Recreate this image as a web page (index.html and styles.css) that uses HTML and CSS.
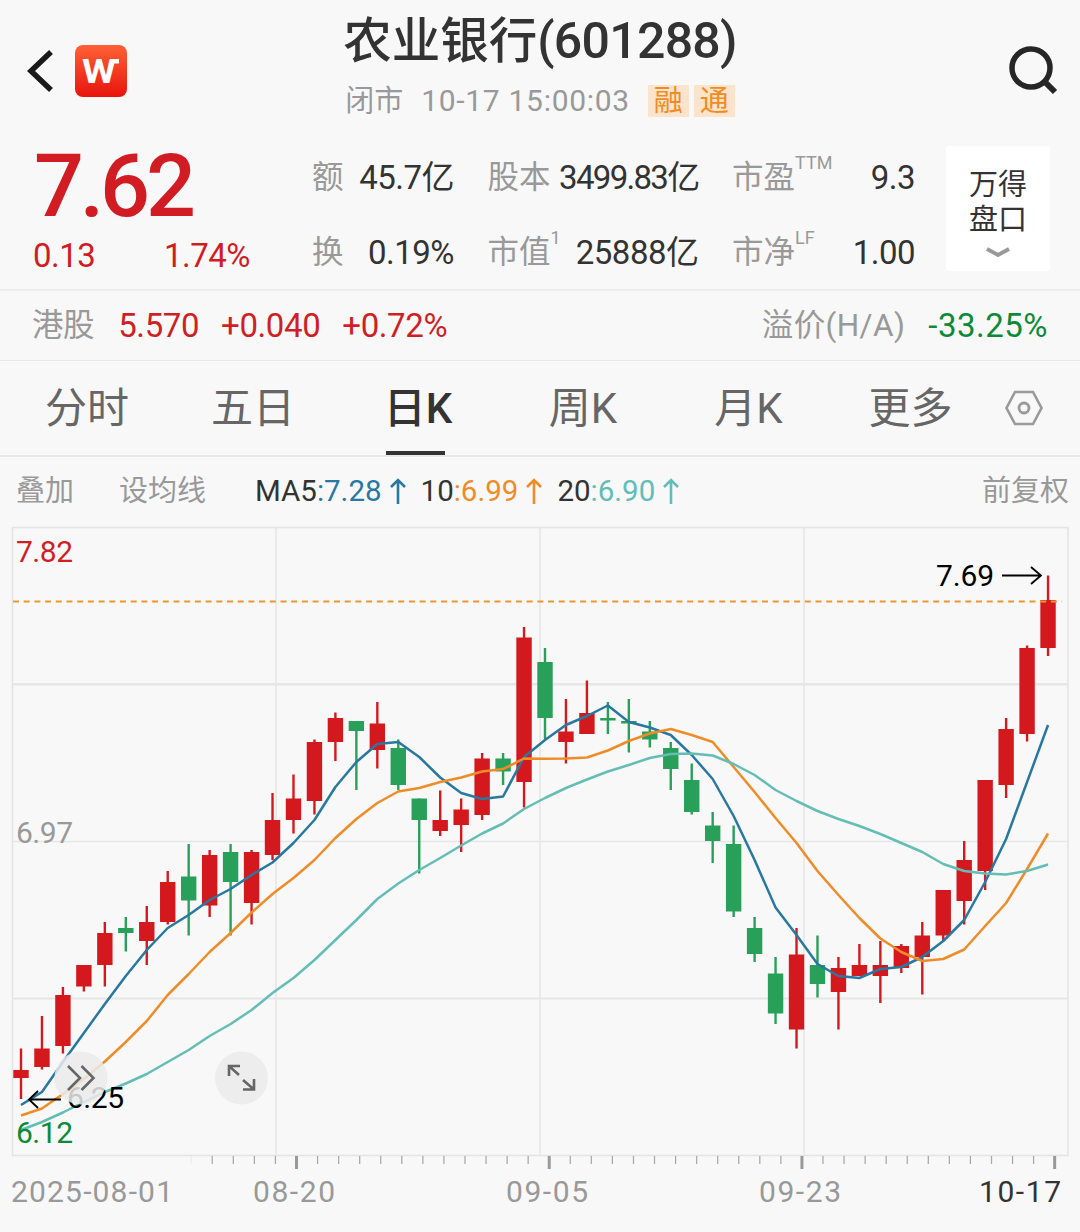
FILE: index.html
```html
<!DOCTYPE html>
<html lang="zh-CN">
<head>
    <meta charset="UTF-8">
    <meta name="viewport" content="width=device-width, initial-scale=1.0">
    <title>农业银行(601288)</title>
    <link rel="stylesheet" href="styles.css">
</head>
<body>
    <header class="header">
      <div class="header-left">
        <svg class="back" width="28" height="44" viewBox="0 0 28 44">
          <path d="M26 3 L6 22 L26 41" fill="none" stroke="#1a1a1a" stroke-width="5.5"/>
        </svg>
        <svg class="logo" width="52" height="52" viewBox="0 0 52 52">
          <defs>
            <linearGradient id="logoBg" x1="0" y1="0" x2="0" y2="1">
              <stop offset="0" stop-color="#ff6136"/>
              <stop offset="1" stop-color="#e8140c"/>
            </linearGradient>
          </defs>
          <rect width="52" height="52" rx="8" fill="url(#logoBg)"/>
          <text class="logo-text" x="7" y="38" textLength="34" lengthAdjust="spacingAndGlyphs">W</text>
          <rect x="36" y="14" width="8" height="4.5" fill="#fff"/>
        </svg>
      </div>
      <div class="header-title">
        <h1>农业银行<span class="code">(601288)</span></h1>
        <div class="status">
          <span>闭市</span>
          <span class="time">10-17 15:00:03</span>
          <span class="tag">融</span>
          <span class="tag">通</span>
        </div>
      </div>
      <svg class="search" width="52" height="52" viewBox="0 0 52 52">
        <circle cx="24" cy="23" r="19" fill="none" stroke="#262626" stroke-width="5.5"/>
        <path d="M37 36 L48 47" stroke="#262626" stroke-width="6"/>
      </svg>
    </header>

    <section class="quote">
      <div class="price-box">
        <div class="price">7.62</div>
        <div class="change"><span>0.13</span><span>1.74%</span></div>
      </div>
      <div class="stats">
        <div class="stat"><span class="label">额</span><span class="value">45.7亿</span></div>
        <div class="stat"><span class="label">股本</span><span class="value tight">3499.83亿</span></div>
        <div class="stat"><span class="label">市盈<sup>TTM</sup></span><span class="value">9.3</span></div>
        <div class="stat"><span class="label">换</span><span class="value">0.19%</span></div>
        <div class="stat"><span class="label">市值<sup>1</sup></span><span class="value">25888亿</span></div>
        <div class="stat"><span class="label">市净<sup>LF</sup></span><span class="value">1.00</span></div>
      </div>
      <div class="depth">
        <div>万得<br>盘口</div>
        <svg width="24" height="12" viewBox="0 0 24 12">
          <path d="M1 2 L12 8 L23 2" fill="none" stroke="#999" stroke-width="3.8"/>
        </svg>
      </div>
    </section>

    <section class="hk">
      <span class="label">港股</span>
      <span class="up hk-price">5.570</span>
      <span class="up hk-change">+0.040</span>
      <span class="up">+0.72%</span>
      <span class="label premium">溢价(H/A)</span>
      <span class="down">-33.25%</span>
    </section>

    <nav class="tabs">
      <span class="tab">分时</span>
      <span class="tab">五日</span>
      <span class="tab active">日K</span>
      <span class="tab">周K</span>
      <span class="tab">月K</span>
      <span class="tab">更多</span>
      <svg class="setting" width="38" height="36" viewBox="0 0 38 36">
        <path d="M10 2 H28 L36.5 18 L28 34 H10 L1.5 18 Z" fill="none" stroke="#999" stroke-width="2.6"/>
        <circle cx="19" cy="18" r="5" fill="none" stroke="#999" stroke-width="2.8"/>
      </svg>
    </nav>

    <section class="ma">
      <span class="overlay">叠加</span>
      <span class="set-ma">设均线</span>
      <span class="ma-item ma5">MA5<b>:7.28</b><svg width="16" height="26" viewBox="0 0 16 26"><path d="M8 26 V2 M1 9 L8 2 L15 9"/></svg></span>
      <span class="ma-item ma10">10<b>:6.99</b><svg width="16" height="26" viewBox="0 0 16 26"><path d="M8 26 V2 M1 9 L8 2 L15 9"/></svg></span>
      <span class="ma-item ma20">20<b>:6.90</b><svg width="16" height="26" viewBox="0 0 16 26"><path d="M8 26 V2 M1 9 L8 2 L15 9"/></svg></span>
      <span class="adjust">前复权</span>
    </section>

    <svg id="chart" class="chart" width="1080" height="707" viewBox="0 525 1080 707"></svg>

    <script src="chart.js"></script>
</body>
</html>
```

FILE: styles.css
```css
* {
  box-sizing: border-box;
}

body {
  margin: 0;
  width: 1080px;
  height: 1232px;
  overflow: hidden;
  background-color: #f8f8f8;
  font-family: Roboto, "Noto Sans CJK SC", sans-serif;
  color: #333;
}

.header {
  display: grid;
  grid-template-columns: 300px 480px 300px;
  height: 146px;
}

.header-left {
  display: flex;
  align-items: center;
  height: 141px;
  padding-left: 25px;
}

.logo {
  margin-left: 22px;
}

.logo-text {
  font-size: 34px;
  font-weight: 700;
  fill: #fff;
}

.header-title {
  text-align: center;
}

h1 {
  margin: 5px 0 0;
  font-size: 48.5px;
  line-height: 72px;
  font-weight: 500;
  white-space: nowrap;
}

.code {
  font-size: 50px;
  letter-spacing: -0.7px;
}

.status {
  display: flex;
  justify-content: center;
  align-items: center;
  height: 46px;
  line-height: 46px;
  font-size: 29px;
  color: #999;
}

.time {
  margin: 0 18px;
  font-size: 30px;
  letter-spacing: 0.7px;
}

.tag {
  width: 41px;
  height: 32px;
  margin-right: 5px;
  line-height: 33px;
  background-color: #fce3cb;
  color: #f08c22;
}

.tag:last-child {
  margin-right: 0;
}

.search {
  justify-self: end;
  margin: 45px 21px 0 0;
}

.quote {
  display: flex;
  height: 145px;
  border-bottom: 2px solid #ebebeb;
}

.price-box {
  width: 312px;
  padding-left: 33px;
  color: #d01c22;
}

.price {
  height: 80px;
  padding-left: 1px;
  font-size: 88px;
  line-height: 80px;
  font-weight: 500;
  letter-spacing: -4.2px;
}

.change {
  display: flex;
  justify-content: space-between;
  width: 217px;
  font-size: 33px;
  line-height: 60px;
  letter-spacing: -0.5px;
}

.stats {
  display: grid;
  grid-template-columns: 142px 211px 183px;
  grid-auto-rows: 75px;
  column-gap: 33.5px;
  margin-top: -6px;
  width: 634px;
}

.stat {
  display: flex;
  justify-content: space-between;
  line-height: 75px;
  white-space: nowrap;
}

.label {
  font-size: 31.5px;
  color: #999;
}

.label sup {
  position: relative;
  top: -8px;
  font-size: 18px;
  line-height: 0;
  vertical-align: super;
}

.value {
  font-size: 33px;
  letter-spacing: -0.5px;
}

.tight {
  letter-spacing: -1.7px;
}

.depth {
  display: flex;
  flex-direction: column;
  align-items: center;
  width: 104px;
  height: 125px;
  padding-top: 22px;
  border-radius: 3px;
  background-color: #fff;
  font-size: 29px;
  line-height: 35px;
}

.depth svg {
  margin-top: 9px;
}

.hk {
  display: flex;
  align-items: center;
  height: 70px;
  line-height: 69px;
  padding: 0 32px;
  border-bottom: 1px solid #e8e8e8;
  font-size: 33px;
  letter-spacing: -0.4px;
}

.up {
  color: #cf1f25;
}

.hk-price,
.hk-change {
  margin-right: 22px;
}

.hk-price {
  margin-left: 24px;
}

.premium {
  margin: 0 23px 0 auto;
  letter-spacing: 0.4px;
}

.down {
  color: #0c8a38;
  letter-spacing: 0.5px;
}

.tabs {
  display: grid;
  grid-template-columns: 174px 158px 172px 158px 173px 151px 74px;
  align-items: center;
  height: 96px;
  border-bottom: 2px solid #e8e8e8;
  font-size: 42px;
  color: #666;
}

.tab {
  position: relative;
  height: 94px;
  line-height: 95px;
  text-align: center;
}

.setting {
  margin-left: 19px;
}

.active {
  color: #333;
  font-weight: 500;
}

.active::after {
  content: "";
  position: absolute;
  left: 54px;
  bottom: 0;
  width: 59px;
  height: 4px;
  background-color: #333;
}

.ma {
  display: flex;
  align-items: center;
  height: 68px;
  line-height: 68px;
  padding: 0 11px 0 16px;
  font-size: 29.5px;
}

.overlay,
.set-ma,
.adjust {
  font-size: 29px;
  color: #999;
}

.set-ma {
  margin: 0 49px 0 45px;
}

.ma-item {
  display: flex;
  align-items: center;
  margin-right: 15px;
}

.ma-item b {
  font-weight: 400;
}

.ma-item svg {
  margin-left: 8px;
  fill: none;
  stroke-width: 2.6;
}

.ma5 b { color: #2878a4; }
.ma5 svg { stroke: #2878a4; }
.ma10 b { color: #f08c28; }
.ma10 svg { stroke: #f08c28; }
.ma20 b { color: #62bdb8; }
.ma20 svg { stroke: #62bdb8; }

.adjust {
  margin-left: auto;
}

.chart {
  display: block;
}

.chart text {
  font-size: 30px;
}

.chart .axis {
  fill: #999;
}
```

FILE: chart.js
```js
// color, high, body top, body bottom, low
const candles = [
  ['r', 1048.5, 1070, 1078, 1099], ['r', 1016, 1048.5, 1067, 1069.5], ['r', 987, 995, 1046, 1053.5],
  ['r', 965, 965, 986.5, 991.5], ['r', 922, 933, 965, 986.5], ['g', 917, 928, 933, 951.5],
  ['r', 906, 922, 941, 965], ['r', 871, 882, 922, 924.5], ['g', 844, 876.5, 900.5, 935.5],
  ['r', 850, 855, 905.5, 917], ['g', 844, 852, 882, 935.5], ['r', 850, 852, 903, 924.5],
  ['r', 793, 820, 855, 860], ['r', 774.5, 798.5, 820, 833.5], ['r', 739.5, 742, 801, 814.5],
  ['r', 712.5, 718, 742, 761], ['g', 721, 721, 731, 790], ['r', 702, 723.5, 750, 768.5],
  ['g', 739.5, 748, 785, 790], ['g', 798.5, 798.5, 820, 873.5], ['r', 790.5, 820, 831, 836],
  ['r', 798.5, 809.5, 825, 852], ['r', 753, 758.5, 815, 820], ['g', 753, 758.5, 771.5, 785],
  ['r', 627, 637.5, 782, 807.5], ['g', 648, 662, 718, 739], ['r', 699, 731.5, 742, 763.5],
  ['r', 680.5, 713, 734, 734], ['g', 702, 718, 720.5, 734], ['g', 699, 721, 723.5, 752.5],
  ['g', 721, 731.5, 739.5, 747.5], ['g', 742, 748, 769, 790], ['g', 763.5, 780, 812, 814.5],
  ['g', 812, 825.5, 841, 863], ['g', 825.5, 844, 911.5, 917], ['g', 917, 928, 954, 962],
  ['g', 957, 973.5, 1013.5, 1024], ['r', 928, 954.5, 1029.5, 1048.5], ['g', 935.5, 965, 984, 997.5],
  ['r', 957, 968, 992, 1029.5], ['r', 944, 965, 976, 976], ['r', 941, 965, 976, 1003],
  ['r', 944, 946, 968, 973], ['r', 922, 935.5, 957, 994.5], ['r', 890, 890, 935.5, 941],
  ['r', 841, 860, 901, 924.5], ['r', 780, 780, 871, 890], ['r', 718, 729, 785, 798],
  ['r', 645.5, 648, 734, 741.5], ['r', 575.5, 600, 648, 656]
];

const ma5 = [1105, 1092, 1062, 1033, 1004, 976, 950, 928, 915, 900, 889, 875, 862.5, 843, 820, 787, 762, 744, 742, 757,
  777.5, 793, 799, 796.5, 757, 740, 725, 716, 705.5, 722, 727.5, 735, 755, 779, 816, 860, 907.5, 935, 964, 976,
  978, 969, 967, 957, 941, 920, 882, 839, 782, 725];
const ma10 = [1115.5, 1108.5, 1094, 1079, 1061.5, 1042, 1021, 995, 974, 952, 933, 912.5, 894, 878, 860, 838, 819, 803, 791.5, 788,
  782, 777.5, 771.5, 769, 758.5, 758.8, 758.5, 757.5, 750.5, 741, 733.5, 729, 735, 742, 767, 792, 818, 843, 871, 895,
  918, 938.5, 952, 961, 959, 949.5, 926, 903, 869, 833.5];
const ma20 = [1130, 1122, 1112.5, 1102, 1092, 1083.5, 1074, 1062, 1050, 1036, 1024, 1010, 993, 978, 960, 940, 920, 899, 883.5, 870,
  858, 845.5, 833.5, 823.5, 809, 798, 788, 779.5, 771.5, 765, 758, 754, 753.5, 755.5, 764, 775, 790, 801, 811, 819,
  826, 834, 843, 852, 864, 871, 873.5, 874.5, 871, 864.5];

const colors = { r: '#d4191e', g: '#28a05a' };
const x = i => 21 + i * 20.96;
let svg = '';

function line(x1, y1, x2, y2, color, width) {
  svg += `<path d="M${x1} ${y1} L${x2} ${y2}" stroke="${color}" stroke-width="${width}"/>`;
}

// grid
svg += '<rect x="12.5" y="527.5" width="1055.5" height="628" fill="none" stroke="#e4e4e4" stroke-width="1.6"/>';
[276, 540, 804].forEach(gx => line(gx, 528, gx, 1155, '#e6e6e6', 1.6));
line(13, 684.3, 1068, 684.3, '#e6e6e6', 2.4);
line(13, 841.5, 1068, 841.5, '#e6e6e6', 1.6);
line(13, 998.5, 1068, 998.5, '#e6e6e6', 2);

svg += '<text x="16" y="842.5" fill="#999" textLength="57">6.97</text>';

candles.forEach(([c, high, top, bottom, low], i) => {
  line(x(i), high, x(i), low, colors[c], 2.4);
  svg += `<rect x="${x(i) - 7.7}" y="${top}" width="15.4" height="${bottom - top}" fill="${colors[c]}"/>`;
});

[[ma5, '#2878a0'], [ma10, '#f08c28'], [ma20, '#64bdb6']].forEach(([ma, color]) => {
  const points = ma.map((y, i) => `${x(i)},${y}`).join(' ');
  svg += `<polyline points="${points}" fill="none" stroke="${color}" stroke-width="2.5" stroke-linejoin="round"/>`;
});

// current price
svg += '<path d="M13 601.5 H1062" stroke="#ee9630" stroke-width="2" stroke-dasharray="6 4.7"/>';

svg += `
  <text x="16" y="562" fill="#cf1f25" textLength="57">7.82</text>
  <text x="16" y="1143" fill="#0c8a38" textLength="57">6.12</text>
  <text x="936" y="586" fill="#000" textLength="58">7.69</text>
  <path d="M1002 575.5 H1041 M1031 567 L1041 575.5 L1031 584" fill="none" stroke="#000" stroke-width="1.8"/>
  <text x="67" y="1108" fill="#000" textLength="57">6.25</text>
  <path d="M61 1099.5 H29 M38 1091 L29 1099.5 L38 1108" fill="none" stroke="#000" stroke-width="1.8"/>`;

// round buttons
svg += `
  <circle cx="81" cy="1078" r="26.5" fill="#ebebeb" fill-opacity="0.85"/>
  <path d="M68 1066 L80 1078 L68 1090 M81.5 1066 L93.5 1078 L81.5 1090" fill="none" stroke="#666" stroke-width="2.6"/>
  <circle cx="241.5" cy="1078" r="26.5" fill="#ebebeb" fill-opacity="0.85"/>
  <path d="M229 1076 V1066 H240 M229 1066 L239 1075 M254 1079 V1089.500 H243 M254 1089.500 L243 1080" fill="none" stroke="#666" stroke-width="2.6"/>`;

// date ruler
for (let i = -5; i <= 36; i++) {
  const tx = 296.5 + i * 21.06;
  if (i >= 0 && i % 12 === 0) {
    line(tx, 1156, tx, 1169, '#999', 3);
  } else {
    line(tx, 1156, tx, 1164, i === -5 ? '#eee' : '#aaa', 1.3);
  }
}

svg += `
  <text class="axis" x="11" y="1202" textLength="162">2025-08-01</text>
  <text class="axis" x="253" y="1202" textLength="82">08-20</text>
  <text class="axis" x="506" y="1202" textLength="82">09-05</text>
  <text class="axis" x="759" y="1202" textLength="82">09-23</text>
  <text x="979" y="1202" fill="#333" textLength="82">10-17</text>`;

document.getElementById('chart').innerHTML = svg;
```
